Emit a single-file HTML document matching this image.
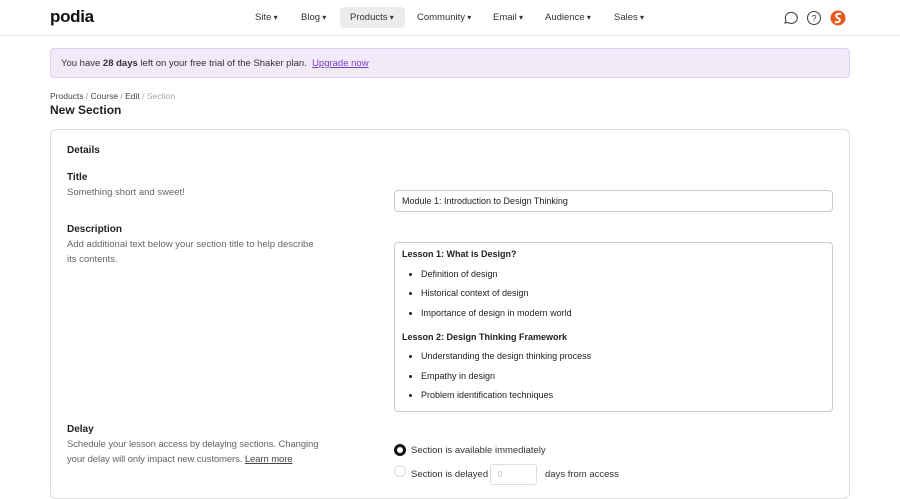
<!DOCTYPE html>
<html><head><style>
*{box-sizing:border-box;margin:0;padding:0}
body{width:900px;height:484px;overflow:hidden;background:#fff;font-family:"Liberation Sans",sans-serif;color:#222;font-size:9.5px;position:relative}
.abs{position:absolute}
.nav a{position:absolute;top:12px;font-size:9.5px;color:#333}
.nav a:after{content:" ▾";font-size:8px}
.muted{color:#666;line-height:15px;white-space:nowrap}
.lbl{font-weight:bold;font-size:10px;color:#222}
ul{list-style:disc;padding-left:19px;margin-top:3px}
li{margin:9.5px 0;line-height:10px}
</style></head><body>
<div class="abs" style="left:50px;top:7px;font-weight:bold;font-size:17px;letter-spacing:-0.3px;color:#111">podia</div>
<div class="abs" style="left:340px;top:7px;width:65px;height:21px;background:#ececec;border-radius:4px"></div>
<div class="nav">
<a style="left:255px">Site</a><a style="left:301px">Blog</a><a style="left:350px">Products</a><a style="left:417px">Community</a><a style="left:493px">Email</a><a style="left:545px">Audience</a><a style="left:614px">Sales</a>
</div>
<svg class="abs" style="left:782px;top:10px" width="16" height="16" viewBox="0 0 16 16"><path d="M3 13 L4 10.5 A6 5.5 0 1 1 6 12.5 Z" fill="none" stroke="#444" stroke-width="1.1"/></svg>
<svg class="abs" style="left:806px;top:10px" width="16" height="16" viewBox="0 0 16 16"><circle cx="8" cy="8" r="6.5" fill="none" stroke="#444" stroke-width="1.1"/><text x="8" y="11.5" font-size="9" text-anchor="middle" fill="#444" font-family="Liberation Sans">?</text></svg>
<svg class="abs" style="left:830px;top:10px" width="16" height="16" viewBox="0 0 16 16"><circle cx="8" cy="8" r="7.5" fill="#e55a1c"/><path d="M11 4 C7 3 4 6 8 8 C12 10 9 13 5 12" fill="none" stroke="#fff" stroke-width="2"/></svg>
<div class="abs" style="left:0;top:35px;width:900px;height:1px;background:#e5e5e5"></div>
<div class="abs" style="left:50px;top:48px;width:800px;height:30px;background:#f0eaf9;border:1px solid #ddd0f0;border-radius:4px;padding:9px 10px;color:#333">You have <b>28 days</b> left on your free trial of the Shaker plan. &nbsp;<span style="color:#7b3fc4;text-decoration:underline">Upgrade now</span></div>
<div class="abs" style="left:50px;top:91px;font-size:8.5px;color:#444">Products <span style="color:#999">/</span> Course <span style="color:#999">/</span> Edit <span style="color:#aaa">/ Section</span></div>
<div class="abs" style="left:50px;top:103px;font-size:12px;font-weight:bold;color:#222">New Section</div>
<div class="abs" style="left:50px;top:129px;width:800px;height:370px;border:1px solid #ddd;border-radius:6px"></div>
<div class="abs lbl" style="left:67px;top:145px">Details</div>
<div class="abs lbl" style="left:67px;top:172px">Title</div>
<div class="abs muted" style="left:67px;top:185px">Something short and sweet!</div>
<div class="abs" style="left:394px;top:190px;width:439px;height:22px;border:1px solid #ccc;border-radius:4px;padding:5px 7px;font-size:9px">Module 1: Introduction to Design Thinking</div>
<div class="abs lbl" style="left:67px;top:224px">Description</div>
<div class="abs muted" style="left:67px;top:237px">Add additional text below your section title to help describe<br>its contents.</div>
<div class="abs" style="left:394px;top:242px;width:439px;height:170px;border:1px solid #ccc;border-radius:4px;padding:6px 7px;font-size:9px">
<b style="display:block;line-height:10px">Lesson 1: What is Design?</b>
<ul><li>Definition of design</li><li>Historical context of design</li><li>Importance of design in modern world</li></ul>
<b style="display:block;line-height:10px;margin-top:14px">Lesson 2: Design Thinking Framework</b>
<ul><li>Understanding the design thinking process</li><li>Empathy in design</li><li>Problem identification techniques</li></ul>
</div>
<div class="abs lbl" style="left:67px;top:424px">Delay</div>
<div class="abs muted" style="left:67px;top:437px;letter-spacing:-0.1px">Schedule your lesson access by delaying sections. Changing<br>your delay will only impact new customers. <span style="text-decoration:underline;color:#444">Learn more</span></div>
<div class="abs" style="left:394px;top:444px;width:12px;height:12px;border:3.5px solid #111;border-radius:50%"></div>
<div class="abs" style="left:411px;top:445px;color:#333">Section is available immediately</div>
<div class="abs" style="left:394px;top:465px;width:12px;height:12px;border:1px solid #ddd;border-radius:50%"></div>
<div class="abs" style="left:411px;top:469px;color:#333">Section is delayed</div>
<div class="abs" style="left:490px;top:464px;width:47px;height:21px;border:1px solid #ddd;border-radius:3px;padding:5px 7px;color:#bbb;font-size:8px">0</div>
<div class="abs" style="left:545px;top:469px;color:#333">days from access</div>
</body></html>
